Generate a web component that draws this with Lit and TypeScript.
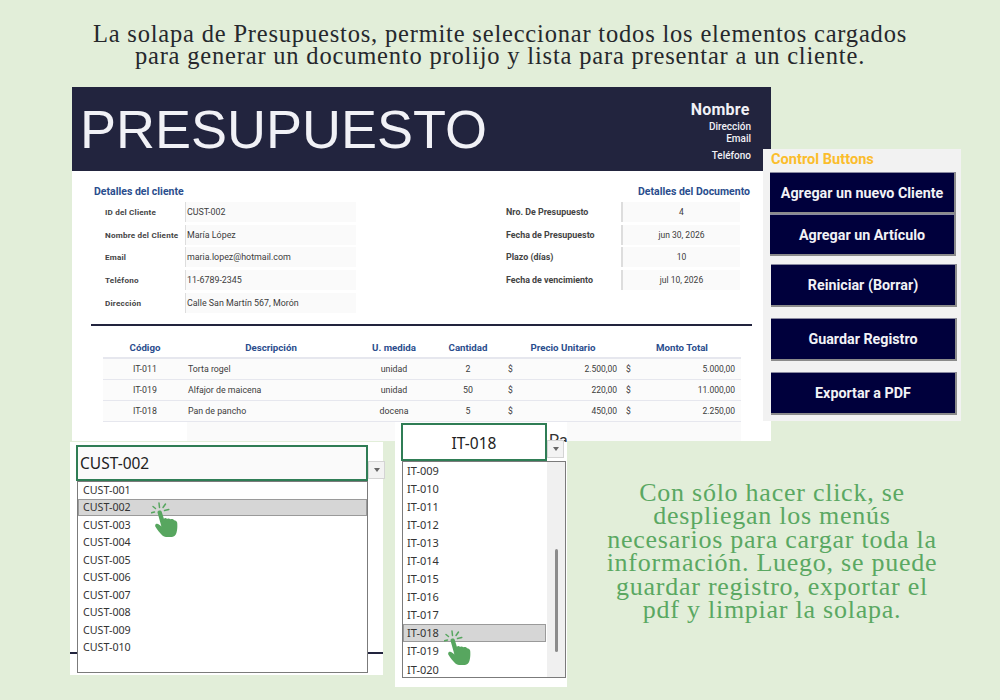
import { LitElement, html, css, svg } from "lit";
import { customElement } from "lit/decorators.js";

const client = [
  ["ID del Cliente", "CUST-002"],
  ["Nombre del Cliente", "María López"],
  ["Email", "maria.lopez@hotmail.com"],
  ["Teléfono", "11-6789-2345"],
  ["Dirección", "Calle San Martín 567, Morón"],
];
const doc = [
  ["Nro. De Presupuesto", "4"],
  ["Fecha de Presupuesto", "jun 30, 2026"],
  ["Plazo (días)", "10"],
  ["Fecha de vencimiento", "jul 10, 2026"],
];
const items = [
  ["IT-011", "Torta rogel", "unidad", "2", "2.500,00", "5.000,00"],
  ["IT-019", "Alfajor de maicena", "unidad", "50", "220,00", "11.000,00"],
  ["IT-018", "Pan de pancho", "docena", "5", "450,00", "2.250,00"],
];
const custs = ["001", "002", "003", "004", "005", "006", "007", "008", "009", "010"].map((n) => "CUST-" + n);
const its = ["009", "010", "011", "012", "013", "014", "015", "016", "017", "018", "019", "020"].map((n) => "IT-" + n);

const hand = html`<svg class="hand" viewBox="0 0 27 35" width="27" height="35">
  ${svg`<path fill="#57a65f" d="M6.5 10.5c-.5-2 3.5-3 4.2-.8l2.2 7c1-.9 2.4-.7 3.2.2 1-.8 2.5-.6 3.3.4 1.2-.6 3-.2 3.8.9 1.2.3 2.8.8 3 2.6.3 3.300.2 7.200-.8 10.200-.8 2.700-2.800 4-6 4.200-3 .3-6-.2-8-1.800-2.500-2-5-5.600-6.800-8.300-.8-1.300-.4-3 .8-3.300 1.800-.4 3.500 1.300 5 2.800z"/>
  <g stroke="#57a65f" stroke-width="1.500" stroke-linecap="round" fill="none">
    <path d="M8.500 5.500 8 1"/><path d="M4.500 6.500 2 4.500"/><path d="M3.500 10 .5 10.800"/><path d="M12 5.500 14.500 2"/><path d="M13.500 8.500 17.800 7.500"/>
  </g>`}
</svg>`;

@customElement("app-root")
export class AppRoot extends LitElement {
  static styles = css`
    :host { display: block; width: 1000px; height: 700px; position: relative; overflow: hidden; background: #e2eed9; font-family: Roboto, "Liberation Sans", sans-serif; }
    .intro { margin: 0; padding-top: 23px; text-align: center; font-family: "Liberation Serif", serif; font-size: 24.500px; line-height: 22px; letter-spacing: 0.810px; color: #26282c; }
    .sheet { position: absolute; left: 72px; top: 87px; width: 699px; height: 354px; background: #fff; overflow: hidden; }
    .banner { height: 84px; background: #22243e; display: flex; justify-content: space-between; box-sizing: border-box; padding: 0 20px 0 8px; color: #f1f1f6; }
    .title { font-family: "Liberation Sans", sans-serif; font-size: 54px; line-height: 84px; white-space: nowrap; }
    .contact { text-align: right; font-weight: 500; font-size: 10px; line-height: 12px; padding-top: 14px; }
    .contact b { display: block; font-size: 16px; line-height: 18px; font-weight: 700; margin: 0 1.500px 2px 0; letter-spacing: 0.200px; }
    .contact .tel { margin-top: 5px; }
    .details { display: flex; justify-content: space-between; padding: 15px 21px 0 22px; height: 153px; box-sizing: border-box; }
    .sect { font-size: 10.500px; line-height: 12px; font-weight: 700; color: #2a4d8d; margin-bottom: 4px; }
    .rows { display: flex; flex-direction: column; gap: 2.700px; }
    .kv { display: flex; height: 20px; align-items: center; font-size: 8.900px; color: #3c3c3c; }
    .cl .kv { padding-left: 11px; }
    .cl .k { width: 80px; font-weight: 700; font-size: 8.100px; letter-spacing: 0.200px; color: #444; }
    .v { height: 100%; display: flex; align-items: center; background: #fafafa; border-left: 1px solid #ddd; box-sizing: border-box; }
    .cl .v { width: 171px; padding-left: 1px; }
    .dc { display: flex; flex-direction: column; align-items: flex-end; }
    .dc .kv { font-size: 8.500px; }
    .dc .k { width: 115px; font-weight: 700; font-size: 8.900px; color: #444; }
    .dc .v { width: 119px; justify-content: center; border-left: 2px solid #ddd; }
    .doc-rows { width: 234px; margin-right: 10px; }
    .rule { height: 2px; background: #22243e; margin: 0 19px; }
    .table { margin: 16px 30px 0 31px; font-size: 8.800px; color: #3c3c3c; }
    .tr { display: grid; grid-template-columns: 84px 168px 78px 70px 120px 118px; height: 20.900px; align-items: center; border-bottom: 1.500px solid #e6e7ee; box-sizing: border-box; background: #fbfbfb; }
    .tr.head { height: 17px; font-weight: 700; font-size: 9.700px; color: #2a4d8d; text-align: center; background: #fff; border-bottom-width: 2px; align-items: start; }
    .desc { padding-left: 1px; }
    .c { text-align: center; }
    .m { display: flex; justify-content: space-between; padding: 0 6px 0 5px; font-size: 8.500px; }
    .m.last { padding-left: 3px; }
    .tail { margin-left: 84px; height: 20px; background: #fafafa; }
    .panel { position: absolute; left: 763px; top: 149px; width: 198px; height: 272px; background: #f2f2f2; box-sizing: border-box; padding: 2px 5px 0 7px; }
    .panel h3 { margin: 0 0 4px 1px; font-size: 14.600px; line-height: 17px; font-weight: 700; color: #fbbd2c; }
    .btn { width: 186px; height: 42px; box-sizing: border-box; background: #00003c; color: #f2f2f6; font-weight: 700; font-size: 14.300px; display: flex; align-items: center; justify-content: center; border-top: 1px solid #8a8aa0; border-right: 2px solid #8b8b8b; border-bottom: 2px solid #8b8b8b; }
    .group { display: flex; flex-direction: column; gap: 0; margin-bottom: 8px; }
    .stack { display: flex; flex-direction: column; gap: 11px; padding-left: 1px; }
    .stack .btn { height: 43px; }
    .drop { position: absolute; background: #fff; }
    .d1 { left: 70px; top: 442px; width: 313px; height: 233px; background: #fff; }
    .d2 { left: 395px; top: 422px; width: 172px; height: 265px; }
    .cell { position: absolute; box-sizing: border-box; border: 2px solid #2f7d55; background: #fff; color: #222; font-family: "Noto Sans", sans-serif; }
    .d1 .cell { left: 6px; top: 3px; width: 292px; height: 36px; font-size: 15.500px; line-height: 33px; padding-left: 2px; background: #fafafa; }
    .d2 .cell { left: 6px; top: 1px; width: 146px; height: 38px; font-size: 15.500px; line-height: 36px; text-align: center; }
    .arrow { position: absolute; box-sizing: border-box; width: 17px; height: 18px; background: #f3f3f3; border: 1px solid #d4d4d4; display: flex; align-items: center; justify-content: center; }
    .arrow::after { content: ""; border: 3.500px solid transparent; border-top: 4px solid #666; border-bottom: 0; }
    .d1 .arrow { left: 298px; top: 19px; }
    .d2 .arrow { left: 152px; top: 18px; }
    .pa { position: absolute; left: 154px; top: 9px; font-size: 16px; line-height: 20px; height: 11px; overflow: hidden; color: #333; font-family: Roboto, sans-serif; }
    .list { position: absolute; box-sizing: border-box; border: 1px solid #7b7b7b; background: #fff; font-family: "Noto Sans", sans-serif; font-size: 10.700px; color: #333; display: flex; flex-direction: column; }
    .d1 .list { left: 7px; top: 39px; width: 291px; height: 192px; margin-top: 0; }
    .d2 .list { left: 7px; top: 39px; width: 164px; height: 217px; padding-right: 19px; }
    .opt { padding-left: 4px; border: 1px solid transparent; box-sizing: border-box; display: flex; align-items: center; flex: none; position: relative; top: -1px; }
    .d1 .opt { height: 17.500px; }
    .d2 .opt { height: 18.100px; padding-left: 3px; font-size: 11px; }
    .opt.sel { background: #d6d6d6; border-color: #9a9a9a; }
    .sb { position: absolute; right: 0; top: 0; bottom: 0; width: 18px; background: #f0f0f0; }
    .thumb { position: absolute; left: 8px; top: 87px; width: 3px; height: 103px; background: #8c8c8c; border-radius: 2px; }
    .dash { position: absolute; left: 0; top: 210px; width: 313px; height: 2px; background: #22243e; }
    .hand { position: absolute; }
    .d1 .hand { left: 81px; top: 60px; }
    .d2 .hand { left: 49px; top: 208px; }
    .outro { position: absolute; left: 602px; top: 481px; width: 340px; margin: 0; text-align: center; font-family: "Liberation Serif", serif; font-size: 26px; line-height: 23.400px; letter-spacing: 0.750px; color: #5aa862; }
  `;

  render() {
    return html`
      <p class="intro">La solapa de Presupuestos, permite seleccionar todos los elementos cargados<br />para generar un documento prolijo y lista para presentar a un cliente.</p>

      <section class="sheet">
        <div class="banner">
          <div class="title">PRESUPUESTO</div>
          <div class="contact"><b>Nombre</b><div>Dirección</div><div>Email</div><div class="tel">Teléfono</div></div>
        </div>
        <div class="details">
          <div class="cl">
            <div class="sect">Detalles del cliente</div>
            <div class="rows">${client.map(([k, v]) => html`<div class="kv"><span class="k">${k}</span><span class="v">${v}</span></div>`)}</div>
          </div>
          <div class="dc">
            <div class="sect">Detalles del Documento</div>
            <div class="rows doc-rows">${doc.map(([k, v]) => html`<div class="kv"><span class="k">${k}</span><span class="v">${v}</span></div>`)}</div>
          </div>
        </div>
        <div class="rule"></div>
        <div class="table">
          <div class="tr head"><span>Código</span><span>Descripción</span><span>U. medida</span><span>Cantidad</span><span>Precio Unitario</span><span>Monto Total</span></div>
          ${items.map((r) => html`<div class="tr"><span class="c">${r[0]}</span><span class="desc">${r[1]}</span><span class="c">${r[2]}</span><span class="c">${r[3]}</span><span class="m"><span>$</span><span>${r[4]}</span></span><span class="m last"><span>$</span><span>${r[5]}</span></span></div>`)}
          <div class="tail"></div>
        </div>
      </section>

      <aside class="panel">
        <h3>Control Buttons</h3>
        <div class="group"><div class="btn">Agregar un nuevo Cliente</div><div class="btn">Agregar un Artículo</div></div>
        <div class="stack"><div class="btn">Reiniciar (Borrar)</div><div class="btn">Guardar Registro</div><div class="btn">Exportar a PDF</div></div>
      </aside>

      <div class="drop d1">
        <div class="dash"></div>
        <div class="cell">CUST-002</div>
        <div class="arrow"></div>
        <div class="list">${custs.map((c) => html`<div class="opt ${c === "CUST-002" ? "sel" : ""}">${c}</div>`)}</div>
        ${hand}
      </div>

      <div class="drop d2">
        <div class="pa">Pa</div>
        <div class="cell">IT-018</div>
        <div class="arrow"></div>
        <div class="list">
          ${its.map((c) => html`<div class="opt ${c === "IT-018" ? "sel" : ""}">${c}</div>`)}
          <div class="sb"><div class="thumb"></div></div>
        </div>
        ${hand}
      </div>

      <p class="outro">Con sólo hacer click, se<br />despliegan los menús<br />necesarios para cargar toda la<br />información. Luego, se puede<br />guardar registro, exportar el<br />pdf y limpiar la solapa.</p>
    `;
  }
}
